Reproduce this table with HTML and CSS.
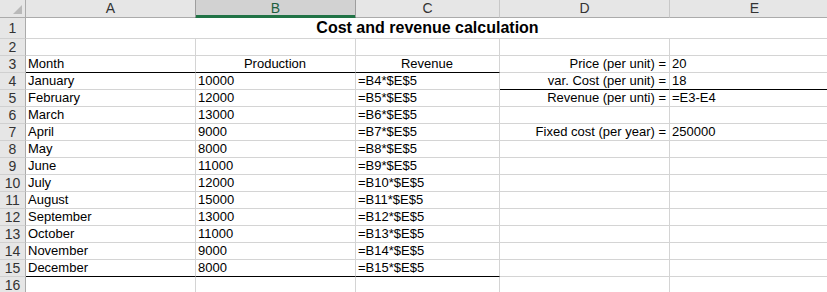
FILE: index.html
```html
<!DOCTYPE html>
<html>
<head>
<meta charset="utf-8">
<link rel="stylesheet" href="styles.css">
</head>
<body>
<div class="sheet">
  <div class="corner"><span class="tri"></span></div>
  <div class="ch">A</div>
  <div class="ch sel">B</div>
  <div class="ch">C</div>
  <div class="ch">D</div>
  <div class="ch">E</div>

  <div class="rh r1">1</div>
  <div class="title">Cost and revenue calculation</div>

  <div class="rh">2</div>
  <div class="c"></div><div class="c"></div><div class="c"></div><div class="c"></div><div class="c"></div>

  <div class="rh">3</div>
  <div class="c bb">Month</div><div class="c bb ctr">Production</div><div class="c bb ctr">Revenue</div><div class="c rt">Price (per unit) =</div><div class="c">20</div>

  <div class="rh">4</div>
  <div class="c">January</div><div class="c">10000</div><div class="c">=B4*$E$5</div><div class="c rt bb">var. Cost (per unit) =</div><div class="c bb">18</div>

  <div class="rh">5</div>
  <div class="c">February</div><div class="c">12000</div><div class="c">=B5*$E$5</div><div class="c rt">Revenue (per unti) =</div><div class="c">=E3-E4</div>

  <div class="rh">6</div>
  <div class="c">March</div><div class="c">13000</div><div class="c">=B6*$E$5</div><div class="c"></div><div class="c"></div>

  <div class="rh">7</div>
  <div class="c">April</div><div class="c">9000</div><div class="c">=B7*$E$5</div><div class="c rt">Fixed cost (per year) =</div><div class="c">250000</div>

  <div class="rh">8</div>
  <div class="c">May</div><div class="c">8000</div><div class="c">=B8*$E$5</div><div class="c"></div><div class="c"></div>

  <div class="rh">9</div>
  <div class="c">June</div><div class="c">11000</div><div class="c">=B9*$E$5</div><div class="c"></div><div class="c"></div>

  <div class="rh">10</div>
  <div class="c">July</div><div class="c">12000</div><div class="c">=B10*$E$5</div><div class="c"></div><div class="c"></div>

  <div class="rh">11</div>
  <div class="c">August</div><div class="c">15000</div><div class="c">=B11*$E$5</div><div class="c"></div><div class="c"></div>

  <div class="rh">12</div>
  <div class="c">September</div><div class="c">13000</div><div class="c">=B12*$E$5</div><div class="c"></div><div class="c"></div>

  <div class="rh">13</div>
  <div class="c">October</div><div class="c">11000</div><div class="c">=B13*$E$5</div><div class="c"></div><div class="c"></div>

  <div class="rh">14</div>
  <div class="c">November</div><div class="c">9000</div><div class="c">=B14*$E$5</div><div class="c"></div><div class="c"></div>

  <div class="rh">15</div>
  <div class="c bb">December</div><div class="c bb">8000</div><div class="c bb">=B15*$E$5</div><div class="c"></div><div class="c"></div>

  <div class="rh">16</div>
  <div class="c"></div><div class="c"></div><div class="c"></div><div class="c"></div><div class="c"></div>
</div>
</body>
</html>
```
FILE: styles.css
```css
html, body {
  margin: 0;
  padding: 0;
  background: #ffffff;
  overflow: hidden;
}
.sheet {
  display: grid;
  grid-template-columns: 26px 170px 160px 144px 170px 170px;
  grid-template-rows: 18px 21px repeat(15, 17px);
  width: 840px;
  font-family: "Liberation Sans", Arial, sans-serif;
  font-size: 13px;
  color: #000;
}
.sheet > div {
  box-sizing: border-box;
  overflow: hidden;
  white-space: nowrap;
}
.corner {
  background: #e6e6e6;
  border-right: 1px solid #ababab;
  border-bottom: 1px solid #ababab;
  position: relative;
}
.tri {
  position: absolute;
  right: 3px;
  bottom: 3px;
  width: 0;
  height: 0;
  border-left: 9px solid transparent;
  border-bottom: 9px solid #b9b9b9;
}
.ch {
  background: #e6e6e6;
  border-right: 1px solid #c8c8c8;
  border-bottom: 1px solid #ababab;
  text-align: center;
  line-height: 17px;
  color: #333;
  font-size: 14px;
}
.ch.sel {
  background: #d2d2d2;
  color: #1e5f3e;
  border-bottom: 1px solid #217346;
  box-shadow: inset 0 -2px 0 #217346;
  border-left: 1px solid #9e9e9e;
  margin-left: -1px;
  border-right: 1px solid #9e9e9e;
}
.rh {
  background: #e6e6e6;
  border-right: 1px solid #ababab;
  border-bottom: 1px solid #d0d0d0;
  text-align: center;
  line-height: 16px;
  color: #333;
  font-size: 14px;
}
.rh.r1 {
  line-height: 21px;
}
.title {
  grid-column: 2 / 7;
  border-bottom: 1px solid #d4d4d4;
  font-weight: bold;
  font-size: 16px;
  line-height: 20px;
  text-align: center;
  padding-right: 11px;
}
.c {
  border-right: 1px solid #d4d4d4;
  border-bottom: 1px solid #d4d4d4;
  line-height: 16px;
  padding: 0 3px 0 2px;
}
.c.ctr {
  text-align: center;
}
.c.rt {
  text-align: right;
}
.c.bb {
  border-bottom: 1px solid #000;
}
```
